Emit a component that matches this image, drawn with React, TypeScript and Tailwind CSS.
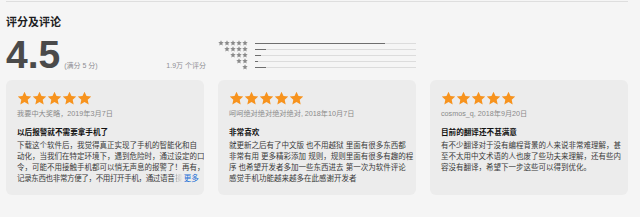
import React from 'react';

const STAR = '12,1.2 15.2,8.1 22.8,8.9 17.1,14 18.7,21.6 12,17.7 5.3,21.6 6.9,14 1.2,8.9 8.8,8.1';

function Star({ size, color }: { size: number; color: string }) {
  return (
    <svg width={size} height={size} viewBox="0 0 24 24" className="shrink-0">
      <polygon points={STAR} fill={color} />
    </svg>
  );
}

const bars = [
  { stars: 5, pct: 81 },
  { stars: 4, pct: 7 },
  { stars: 3, pct: 4 },
  { stars: 2, pct: 2 },
  { stars: 1, pct: 7 },
];

interface Review {
  author: string;
  title: string;
  lines: string[];
  more?: boolean;
}

const reviews: Review[] = [
  {
    author: '我要中大奖略，2019年3月7日',
    title: '以后报警就不需要拿手机了',
    lines: [
      '下载这个软件后，我觉得真正实现了手机的智能化和自',
      '动化，当我们在特定环境下，遇到危险时，通过设定的口',
      '令，可能不用接触手机都可以悄无声息的报警了！再有，',
      '记录东西也非常方便了，不用打开手机，通过语音',
    ],
    more: true,
  },
  {
    author: '呵呵绝对绝对绝对绝对, 2018年10月7日',
    title: '非常喜欢',
    lines: [
      '就更新之后有了中文版 也不用越狱 里面有很多东西都',
      '非常有用 更多精彩添加 规则，规则里面有很多有趣的程',
      '序 也希望开发者多加一些东西进去 第一次为软件评论',
      '感觉手机功能越来越多在此感谢开发者',
    ],
  },
  {
    author: 'cosmos_q, 2018年9月20日',
    title: '目前的翻译还不甚满意',
    lines: [
      '有不少翻译对于没有编程背景的人来说非常难理解，甚',
      '至不太用中文术语的人也废了些功夫来理解，还有些内',
      '容没有翻译，希望下一步这些可以得到优化。',
    ],
  },
];

function ReviewCard({ review }: { review: Review }) {
  return (
    <div className="w-[198px] h-[115px] rounded-[6px] bg-[#ececec] px-[11px] pt-[11px] overflow-hidden">
      <div className="flex h-[15px]">
        {[0, 1, 2, 3, 4].map((i) => (
          <Star key={i} size={15} color="#f7931e" />
        ))}
      </div>
      <div className="mt-[3px] text-[7.2px] leading-[10px] text-[#8a8a8a] whitespace-nowrap">{review.author}</div>
      <div className="mt-[8px] text-[7.6px] leading-[11px] font-bold text-[#111] whitespace-nowrap">{review.title}</div>
      <div className="mt-[2px] text-[7.5px] leading-[11px] text-[#3a3a3a]">
        {review.lines.map((l, i) =>
          review.more && i === review.lines.length - 1 ? (
            <div key={i} className="flex whitespace-nowrap">
              <span className="tracking-[-0.35px] pr-[1px]">{l}</span>
              <span className="bg-gradient-to-r from-[#3a3a3a]/50 to-[#3a3a3a]/0 bg-clip-text text-transparent">操</span>
              <span className="ml-[1px] text-[#1a6fd6]">更多</span>
            </div>
          ) : (
            <div key={i} className="whitespace-nowrap">
              {l}
            </div>
          )
        )}
      </div>
    </div>
  );
}

export default function App() {
  return (
    <div className="w-[640px] h-[217px] bg-[#f5f5f5] overflow-hidden font-['Liberation_Sans','Noto_Sans_CJK_SC',sans-serif] text-[#1d1d1f]">
      <div className="mx-[6px] mt-px h-px w-[622px] bg-[#dedede]" />

      <div className="px-[6px]">
        <h2 className="mt-[14px] text-[11px] leading-[12px] font-bold text-[#1d1d1f]">评分及评论</h2>

        <div className="mt-[7px] flex items-start">
          {/* score */}
          <div className="flex w-[200px] items-baseline">
            <span className="text-[39px] leading-none font-bold text-[#4a4a4a]">4.5</span>
            <span className="ml-[4px] text-[7px] text-[#8e8e93]">(满分 5 分)</span>
            <span className="ml-auto text-[7px] text-[#8e8e93]">1.9万 个评分</span>
          </div>

          {/* histogram */}
          <div className="ml-[12px] mt-[5px] flex flex-col">
            {bars.map((b) => (
              <div key={b.stars} className="flex h-[6px] items-center">
                <div className="flex w-[30px] justify-end">
                  {Array.from({ length: b.stars }).map((_, i) => (
                    <Star key={i} size={6} color="#8a8a8a" />
                  ))}
                </div>
                <div className="ml-[7px] h-px w-[161px] bg-[#dcdcdc]">
                  <div className="h-px bg-[#6e6e6e]" style={{ width: `${b.pct}%` }} />
                </div>
              </div>
            ))}
          </div>
        </div>
      </div>

      <div className="mt-[6px] flex gap-[14px] px-[6px]">
        {reviews.map((r, i) => (
          <ReviewCard key={i} review={r} />
        ))}
      </div>
    </div>
  );
}
